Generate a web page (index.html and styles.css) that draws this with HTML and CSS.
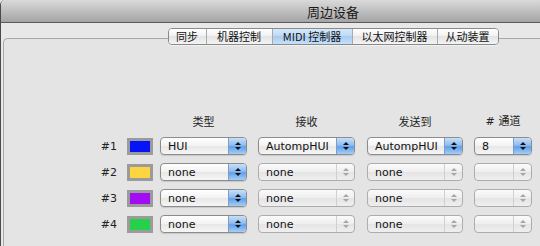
FILE: index.html
```html
<!DOCTYPE html>
<html lang="zh-CN">
<head>
    <meta charset="UTF-8">
    <title>周边设备</title>
    <link rel="stylesheet" href="styles.css">
</head>
<body>
    <div class="window">
        <!-- Title bar -->
        <div class="titlebar">周边设备</div>

        <!-- Tabs -->
        <div class="tabbar">
            <div class="tabs">
                <div class="tab w1">同步</div>
                <div class="tab w2">机器控制</div>
                <div class="tab w3 selected">MIDI 控制器</div>
                <div class="tab w4">以太网控制器</div>
                <div class="tab w5">从动装置</div>
            </div>
        </div>

        <div class="panel">
            <div class="grid">
                <div></div>
                <div></div>
                <div class="head c1">类型</div>
                <div class="head c2">接收</div>
                <div class="head c3">发送到</div>
                <div class="head c4"><span class="hash">#</span>通道</div>

                <div class="num">#1</div>
                <div class="swatch blue"></div>
                <div class="popup c1"><span class="value">HUI</span><span class="stepper"></span></div>
                <div class="popup c2"><span class="value">AutompHUI</span><span class="stepper"></span></div>
                <div class="popup c3"><span class="value">AutompHUI</span><span class="stepper"></span></div>
                <div class="popup c4"><span class="value">8</span><span class="stepper"></span></div>

                <div class="num">#2</div>
                <div class="swatch yellow"></div>
                <div class="popup c1"><span class="value">none</span><span class="stepper"></span></div>
                <div class="popup c2 off"><span class="value">none</span><span class="stepper"></span></div>
                <div class="popup c3 off"><span class="value">none</span><span class="stepper"></span></div>
                <div class="popup c4 off"><span class="value"></span><span class="stepper"></span></div>

                <div class="num">#3</div>
                <div class="swatch purple"></div>
                <div class="popup c1"><span class="value">none</span><span class="stepper"></span></div>
                <div class="popup c2 off"><span class="value">none</span><span class="stepper"></span></div>
                <div class="popup c3 off"><span class="value">none</span><span class="stepper"></span></div>
                <div class="popup c4 off"><span class="value"></span><span class="stepper"></span></div>

                <div class="num">#4</div>
                <div class="swatch green"></div>
                <div class="popup c1"><span class="value">none</span><span class="stepper"></span></div>
                <div class="popup c2 off"><span class="value">none</span><span class="stepper"></span></div>
                <div class="popup c3 off"><span class="value">none</span><span class="stepper"></span></div>
                <div class="popup c4 off"><span class="value"></span><span class="stepper"></span></div>
            </div>
        </div>
    </div>
</body>
</html>
```

FILE: styles.css
```css
/* General */
body {
    margin: 0;
    background-color: #e8e8e8;
    overflow: hidden;
    font-family: "DejaVu Sans", "Noto Sans CJK SC", sans-serif;
    font-size: 11px;
    color: #111;
}

/* the real window is wider than the view, its centre sits at x=333 */
.window {
    width: 540px;
    height: 246px;
    box-sizing: border-box;
    border-left: 1px solid #4a4a4a;
    border-top-left-radius: 5px;
    background-color: #e8e8e8;
    display: flex;
    flex-direction: column;
    overflow: hidden;
}

/* Title bar */
.titlebar {
    height: 22px;
    flex-shrink: 0;
    padding-left: 125px;
    border-bottom: 1px solid #5a5a5a;
    background: linear-gradient(#dadada, #a4a4a4);
    text-align: center;
    font-family: "Noto Sans CJK SC", sans-serif;
    font-size: 13px;
    line-height: 23px;
    color: #1a1a1a;
}

/* Tabs */
.tabbar {
    display: flex;
    justify-content: center;
    margin-top: 5px;
    padding-left: 125px;
    position: relative;
    z-index: 1;
}

.tabs {
    display: flex;
    border: 1px solid #8a8a8a;
    border-radius: 4px;
    overflow: hidden;
    box-shadow: 0 1px 0 rgba(255, 255, 255, 0.5);
}

.tab {
    height: 15px;
    box-sizing: border-box;
    border-right: 1px solid #aaaaaa;
    background: linear-gradient(#ffffff, #f0f0f0 50%, #e4e4e4 50%, #f3f3f3);
    text-align: center;
    font-family: "Noto Sans CJK SC", sans-serif;
    font-size: 11px;
    line-height: 15px;
}

.tab:last-child {
    border-right: none;
}

.tab.selected {
    background: linear-gradient(#d6e8fb, #bcd8f5 50%, #a9cbf0 50%, #c6e0fa);
}

.w1 { width: 38px; }
.w2 { width: 66px; }
.w3 { width: 80px; }
.w4 { width: 85px; }
.w5 { width: 60px; }

/* Panel */
.panel {
    flex: 1;
    margin: -7px 0 0 2px;
    border: 1px solid #a9a9a9;
    border-right: none;
    border-bottom: none;
    border-top-left-radius: 5px;
    background-color: #e4e4e4;
    padding: 74px 0 0 94px;
}

.grid {
    display: grid;
    grid-template-columns: 29px 33px 98px 109px 107px 58px;
    row-gap: 8px;
    align-items: center;
}

.head {
    text-align: center;
    font-family: "Noto Sans CJK SC", sans-serif;
    font-size: 11px;
    line-height: 14px;
    color: #222;
}

.hash {
    font-family: "DejaVu Sans", sans-serif;
    margin-right: 4px;
}

.c1 { width: 87px; }
.c2 { width: 97px; }
.c3 { width: 96px; }
.c4 { width: 58px; }

.num {
    text-align: right;
    padding-right: 10px;
    font-size: 11px;
    color: #222;
}

.swatch {
    width: 26px;
    height: 17px;
    box-sizing: border-box;
    border: 3px solid #9b9b9b;
}

.blue { background-color: #0515f8; }
.yellow { background-color: #fdd540; }
.purple { background-color: #a10cf3; }
.green { background-color: #24d04c; }

/* Popup buttons */
.popup {
    height: 18px;
    box-sizing: border-box;
    border: 1px solid #8c8c8c;
    border-radius: 4px;
    display: flex;
    align-items: center;
    background: linear-gradient(#ffffff, #f2f2f2 50%, #e6e6e6 50%, #f6f6f6);
    box-shadow: 0 1px 1px rgba(0, 0, 0, 0.12);
}

.popup .value {
    flex: 1;
    padding-left: 7px;
    white-space: nowrap;
    overflow: hidden;
}

.stepper {
    width: 17px;
    align-self: stretch;
    border-left: 1px solid #7f9cc6;
    border-radius: 0 3px 3px 0;
    background: linear-gradient(#c7dff8, #8fbdf0 45%, #619fe9 55%, #a4cff8);
    display: flex;
    flex-direction: column;
    align-items: center;
    justify-content: center;
    gap: 2px;
}

.stepper::before,
.stepper::after {
    content: "";
    width: 0;
    height: 0;
    border-left: 3px solid transparent;
    border-right: 3px solid transparent;
}

.stepper::before {
    border-bottom: 3px solid #111;
}

.stepper::after {
    border-top: 3px solid #111;
}

.popup.off {
    border-color: #adadad;
    background: linear-gradient(#fbfbfb, #eeeeee 50%, #e4e4e4 50%, #efefef);
    box-shadow: none;
}

.popup.off .stepper {
    background: none;
    border-left: 1px solid #d0d0d0;
}

.popup.off .stepper::before {
    border-bottom-color: #a6a6a6;
}

.popup.off .stepper::after {
    border-top-color: #a6a6a6;
}
```
